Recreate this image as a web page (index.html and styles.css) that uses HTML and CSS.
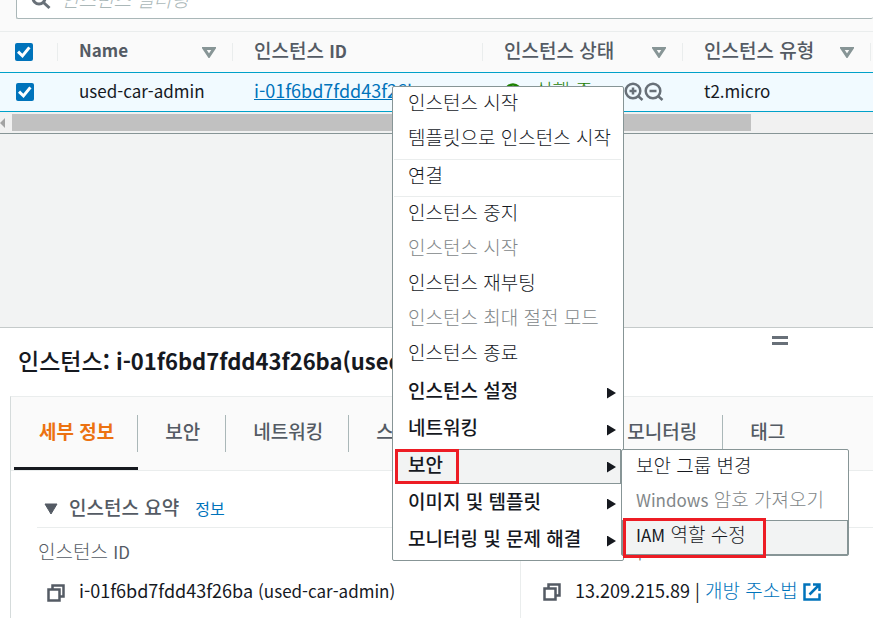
FILE: index.html
```html
<!DOCTYPE html>
<html lang="ko">
<head>
<meta charset="utf-8">
<title>인스턴스</title>
<link rel="stylesheet" href="styles.css">
</head>
<body>
<main class="instances">
  <div class="toolbar">
    <div class="search">
      <svg class="search-icon" width="20" height="20" viewBox="0 0 20 20" aria-hidden="true"><circle cx="8" cy="8" r="6"/><path d="M12.5 12.5 18.5 18"/></svg>
      <input class="search-input" type="text" placeholder="인스턴스 필터링" aria-label="인스턴스 필터링">
    </div>
  </div>
  <table class="grid">
    <colgroup><col class="col-check"><col class="col-name"><col class="col-id"><col class="col-state"><col class="col-type"><col></colgroup>
    <thead>
      <tr>
        <th><input class="check" type="checkbox" checked aria-label="모두 선택"></th>
        <th><div class="head"><span class="en">Name</span><svg class="sort" width="14" height="11" viewBox="0 0 14 11" aria-hidden="true"><path d="M2 1.500h10L7 9z"/></svg></div></th>
        <th><div class="head"><span>인스턴스 <span class="en">ID</span></span></div></th>
        <th><div class="head"><span>인스턴스 상태</span><svg class="sort" width="14" height="11" viewBox="0 0 14 11" aria-hidden="true"><path d="M2 1.500h10L7 9z"/></svg></div></th>
        <th><div class="head"><span>인스턴스 유형</span><svg class="sort" width="14" height="11" viewBox="0 0 14 11" aria-hidden="true"><path d="M2 1.500h10L7 9z"/></svg></div></th>
        <th><div class="head"></div></th>
      </tr>
    </thead>
    <tbody>
      <tr>
        <td><input class="check" type="checkbox" checked aria-label="used-car-admin 선택"></td>
        <td><span class="en">used-car-admin</span></td>
        <td><a class="link id-link num" href="#">i-01f6bd7fdd43f26ba</a></td>
        <td>
          <div class="state">
            <svg width="18" height="18" viewBox="0 0 18 18" class="ok" aria-hidden="true"><circle cx="9" cy="9" r="7.5"/><path d="m5.5 9 2.5 2.5 4.500-5"/></svg>
            <span class="state-text">실행 중</span>
            <span class="zooms">
              <svg width="20" height="20" viewBox="0 0 20 20" class="zoom" aria-hidden="true"><circle cx="9" cy="9" r="7.300"/><path d="M9 5.500v7M5.500 9h7M14 14l4.500 4"/></svg>
              <svg width="20" height="20" viewBox="0 0 20 20" class="zoom" aria-hidden="true"><circle cx="9" cy="9" r="7.300"/><path d="M5.500 9h7M14 14l4.500 4"/></svg>
            </span>
          </div>
        </td>
        <td><span class="en">t2.micro</span></td>
        <td></td>
      </tr>
    </tbody>
  </table>
  <div class="scrollbar"><svg width="5" height="10" viewBox="0 0 5 10" aria-hidden="true"><path d="M5 0v10L0 5z" fill="#a3a3a3"/></svg><div class="thumb"></div></div>
</main>

<section class="panel">
  <div class="panel-head">
    <h2>인스턴스<span class="en">: i-01f6bd7fdd43f26ba(used-car-admin)</span></h2>
    <span class="grip"></span>
  </div>
  <div class="card">
    <nav class="tabs">
      <button class="tab active">세부 정보</button>
      <button class="tab">보안</button>
      <button class="tab">네트워킹</button>
      <button class="tab">스토리지</button>
      <button class="tab">상태 검사</button>
      <button class="tab">모니터링</button>
      <button class="tab">태그</button>
    </nav>
    <div class="details">
      <div class="summary">
        <svg width="14" height="12" viewBox="0 0 14 12" aria-hidden="true"><path d="M1 1h12L7 11z" fill="#545b64" stroke="#545b64" stroke-linejoin="round"/></svg>
        <h3>인스턴스 요약</h3>
        <a class="link info" href="#">정보</a>
      </div>
      <div class="fields">
        <div class="field">
          <div class="label">인스턴스 <span class="en">ID</span></div>
          <div class="value">
            <svg class="copy" width="18" height="18" viewBox="0 0 18 18" aria-hidden="true"><path d="M5.500 5V1.500h11v11H13"/><path d="M1.500 5.500h11v11h-11z"/></svg>
            <span class="text"><span class="num">i-01f6bd7fdd43f26ba </span><span class="en">(used-car-admin)</span></span>
          </div>
        </div>
        <div class="field">
          <div class="label">퍼블릭 <span class="en">IPv4</span> 주소</div>
          <div class="value">
            <svg class="copy" width="18" height="18" viewBox="0 0 18 18" aria-hidden="true"><path d="M5.500 5V1.500h11v11H13"/><path d="M1.500 5.500h11v11h-11z"/></svg>
            <span class="text"><span class="num">13.209.215.89 | </span><a class="link" href="#">개방 주소법</a></span>
            <svg class="external" width="18" height="18" viewBox="0 0 18 18" aria-hidden="true"><path d="M7.500 1.500h-6v15h15v-6M10 1.500h6.500V8M16 2 6.500 11.500"/></svg>
          </div>
        </div>
      </div>
    </div>
  </div>
</section>

<div class="menu context">
  <div class="group">
    <button class="item">인스턴스 시작</button>
    <button class="item">템플릿으로 인스턴스 시작</button>
  </div>
  <div class="group">
    <button class="item">연결</button>
  </div>
  <div class="group">
    <button class="item">인스턴스 중지</button>
    <button class="item" disabled>인스턴스 시작</button>
    <button class="item">인스턴스 재부팅</button>
    <button class="item" disabled>인스턴스 최대 절전 모드</button>
    <button class="item">인스턴스 종료</button>
  </div>
  <div class="submenus">
    <button class="item parent">인스턴스 설정</button>
    <button class="item parent">네트워킹</button>
    <div class="open">
      <button class="item parent selected">보안</button>
      <span class="mark mark-security"></span>
      <div class="menu sub">
        <button class="item">보안 그룹 변경</button>
        <button class="item" disabled><span class="en">Windows</span> 암호 가져오기</button>
        <button class="item selected"><span class="en">IAM</span> 역할 수정</button>
        <span class="mark mark-iam"></span>
      </div>
    </div>
    <button class="item parent">이미지 및 템플릿</button>
    <button class="item parent">모니터링 및 문제 해결</button>
  </div>
</div>
</body>
</html>
```
FILE: styles.css
```css
* { box-sizing: border-box; }

body {
  margin: 0;
  height: 100vh;
  display: flex;
  flex-direction: column;
  overflow: hidden;
  position: relative;
  background: #f2f3f3;
  color: #16191f;
  font-family: "Noto Sans CJK KR", sans-serif;
  font-size: 19px;
  line-height: 24px;
}

button {
  font: inherit;
  color: inherit;
  background: none;
  border: 0;
  padding: 0;
  margin: 0;
  text-align: left;
  white-space: pre;
}

svg { flex: none; display: block; fill: none; }

.en { font-size: 17px; }
.num { font-size: 18px; }
.link { color: #0073bb; text-decoration: none; }

.instances { flex: 1; min-height: 0; }

/* Toolbar */
.toolbar {
  height: 31px;
  padding: 0 0 12px 16px;
  display: flex;
  align-items: flex-end;
  overflow: hidden;
  background: #fafafa;
}
.search {
  flex: 1;
  height: 40px;
  display: flex;
  align-items: center;
  gap: 10px;
  padding-left: 14px;
  border: 1px solid #aab7b8;
  border-right: 0;
  border-radius: 2px;
  background: #fff;
}
.search-icon { stroke: #687078; stroke-width: 3; margin-top: 2px; }
.search-input {
  flex: 1;
  border: 0;
  padding: 0;
  background: none;
  font: inherit;
}
.search-input::placeholder { color: #aab7b8; font-style: italic; font-weight: 300; }

/* Instance table */
.grid { width: 100%; table-layout: fixed; border-collapse: separate; border-spacing: 0; }
.col-check { width: 57px; }
.col-name { width: 175px; }
.col-id { width: 250px; }
.col-state { width: 200px; }
.col-type { width: 188px; }
.grid th {
  height: 41px;
  padding: 0;
  border-top: 1px solid #eaeded;
  background: #fafafa;
  color: #545b64;
  font-weight: 500;
  text-align: left;
}
.grid th .en { font-weight: 700; }
.grid th:first-child { padding-left: 15px; }
.head {
  height: 18px;
  display: flex;
  align-items: center;
  justify-content: space-between;
  padding: 0 16px 0 21px;
  border-left: 1px solid #eaeded;
  white-space: nowrap;
}
.head > span { padding-bottom: 4px; }
.sort { stroke: #879596; stroke-width: 3; }
.grid td {
  height: 40px;
  padding: 0 0 4px 22px;
  border-top: 1px solid #00a1c9;
  border-bottom: 1px solid #00a1c9;
  background: #f1faff;
  white-space: nowrap;
}
.grid td:first-child { padding: 0 0 0 16px; }
.id-link { text-decoration: underline; }

.check {
  appearance: none;
  display: grid;
  place-items: center;
  width: 18px;
  height: 18px;
  margin: 0;
  border-radius: 2px;
  background: #0073bb;
}
.check::before {
  content: "";
  width: 14px;
  height: 14px;
  background: #fff;
  clip-path: polygon(0 55%, 15% 40%, 38% 62%, 80% 10%, 97% 24%, 40% 92%);
}

.state { display: flex; align-items: center; gap: 13px; padding-top: 3px; color: #1d8102; }
.state-text { font-weight: 300; padding-bottom: 4px; }
.ok { stroke: #1d8102; stroke-width: 2.500; }
.zooms { display: flex; margin-left: 18px; }
.zoom { stroke: #687078; stroke-width: 2.500; }

.scrollbar {
  height: 22px;
  display: flex;
  align-items: center;
  gap: 7px;
  border-bottom: 1px solid #879596;
  background: #f1f1f1;
}
.thumb { width: 739px; max-width: 86%; height: 17px; background: #c1c1c1; }

/* Details panel */
.panel {
  flex: none;
  height: 291px;
  display: flex;
  flex-direction: column;
  border-top: 1px solid #c5caca;
  background: #fff;
}
.panel-head { height: 68px; padding: 0 0 5px 18px; position: relative; display: flex; align-items: center; }
.panel-head h2 { margin: 0; font-size: 23px; font-weight: 500; white-space: nowrap; }
.panel-head .en { font-size: 22px; font-weight: 700; }
.grip {
  position: absolute;
  right: 85px;
  top: 8px;
  width: 16px;
  height: 9px;
  border: solid #687078;
  border-width: 3px 0;
}
.card {
  flex: 1;
  display: flex;
  flex-direction: column;
  margin-left: 10px;
  border-top: 1px solid #eaeded;
  border-left: 1px solid #d5dbdb;
}
.tabs {
  height: 74px;
  display: flex;
  align-items: stretch;
  padding-left: 3px;
  background: #fafafa;
  border-bottom: 1px solid #eaeded;
}
.tab {
  position: relative;
  flex: none;
  padding: 0 26px 5px 27px;
  color: #545b64;
  font-weight: 500;
}
.tab:not(:last-child)::after {
  content: "";
  position: absolute;
  right: 0;
  top: 18px;
  width: 1px;
  height: 37px;
  background: #aab7b8;
}
.tab.active { color: #ec7211; font-weight: 700; border-bottom: 3px solid #16191f; padding: 0 24px 2px 25px; }

.details { flex: 1; padding-left: 26px; display: flex; flex-direction: column; }
.summary {
  height: 57px;
  padding: 17px 0 0 7px;
  display: flex;
  align-items: center;
  gap: 11px;
  border-bottom: 1px solid #eaeded;
}
.summary svg { margin-top: 3px; }
.summary h3 { margin: 0; padding-bottom: 2px; font-size: 19px; font-weight: 500; color: #545b64; }
.info { margin-left: 5px; font-size: 16px; }
.fields { flex: 1; display: flex; }
.field { flex: 0 0 483px; padding: 11px 0 0 1px; }
.field + .field { flex: 1; border-left: 1px solid #eaeded; padding-left: 13px; }
.label { color: #545b64; font-weight: 300; }
.label .en { font-weight: 400; }
.value { display: flex; align-items: center; padding: 14px 0 0 9px; white-space: pre; }
.value .text { padding-bottom: 4px; }
.copy { stroke: #545b64; stroke-width: 2.500; margin-right: 14px; }
.value .link { font-weight: 300; }
.external { stroke: #0073bb; stroke-width: 2.500; margin-left: 5px; }

/* Context menu */
.menu {
  position: absolute;
  border: 1px solid #879596;
  border-radius: 2px;
  background: #fff;
}
.context { left: 392px; top: 86px; width: 232px; }
.group { border-bottom: 1px solid #eaeded; padding-bottom: 2px; margin: 0 2px 0 1px; }
.group:nth-of-type(2) { padding-bottom: 1px; }
.group:nth-of-type(3) { border: 0; padding-bottom: 0; }
.item {
  display: block;
  width: 100%;
  height: 35px;
  padding: 0 0 6px 13px;
  font-weight: 300;
  border: 1px solid transparent;
}
.item:disabled { color: #828789; }
.item .en { font-weight: 400; }
.submenus { padding: 1px 2px 0 2px; }
.parent {
  display: flex;
  align-items: center;
  justify-content: space-between;
  margin: 2px 0;
  padding: 0 4px 6px 12px;
  font-weight: 500;
}
.parent::after {
  content: "";
  margin-top: 7px;
  width: 9px;
  height: 11px;
  background: #16191f;
  clip-path: polygon(0 0, 100% 50%, 0 100%);
}
.open { position: relative; }
.selected { background: #f2f3f3; border-color: #879596; }
.sub { left: 100%; top: 0; width: 228px; }

.mark { position: absolute; border: 3px solid #ed1c24; pointer-events: none; }
.mark-security { left: 0; top: 0; width: 64px; height: 35px; }
.mark-iam { left: 1px; bottom: -3px; width: 143px; height: 40px; }
```
